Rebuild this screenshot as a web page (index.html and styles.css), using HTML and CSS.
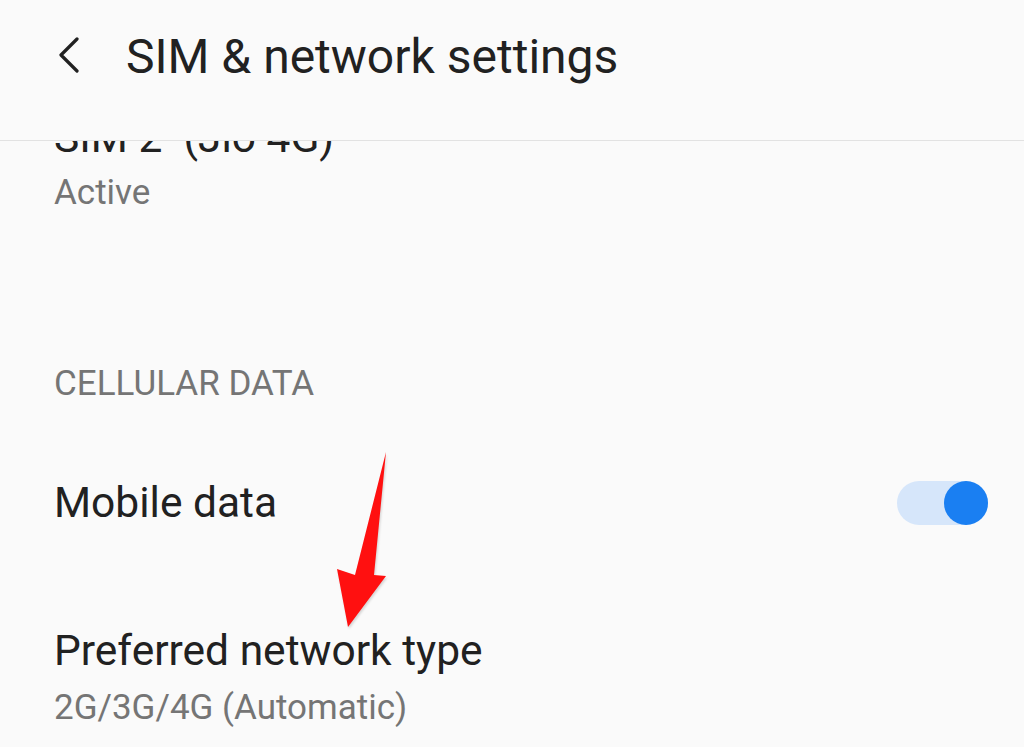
FILE: index.html
```html
<!DOCTYPE html>
<html lang="en">
<head>
    <meta charset="UTF-8">
    <meta name="viewport" content="width=device-width, initial-scale=1.0">
    <title>SIM &amp; network settings</title>
    <link rel="stylesheet" href="styles.css">
</head>
<body>
    <header class="toolbar">
        <svg class="back" width="24" height="36" viewBox="0 0 24 36">
            <path d="M20 2 L4 18 L20 34" fill="none" stroke="#212121" stroke-width="3.2" stroke-linecap="round" stroke-linejoin="round"/>
        </svg>
        <h1 class="title">SIM &amp; network settings</h1>
    </header>

    <main class="content">
        <div class="pref pref-sim">
            <div class="pref-title">SIM 2  (Jio 4G)</div>
            <div class="pref-summary">Active</div>
        </div>

        <div class="category">CELLULAR DATA</div>

        <div class="pref pref-switch">
            <div class="pref-title">Mobile data</div>
            <div class="switch on"><span class="thumb"></span></div>
        </div>

        <div class="pref pref-network">
            <div class="pref-title">Preferred network type</div>
            <div class="pref-summary">2G/3G/4G (Automatic)</div>
        </div>
    </main>

    <svg class="arrow" width="70" height="190" viewBox="0 0 70 190">
        <polygon points="57,2 45,125 57,126 19,177 8,119 26,125" fill="#ff1010"/>
    </svg>
</body>
</html>
```

FILE: styles.css
```css
html, body {
    margin: 0;
    height: 100%;
}
body {
    background-color: #fafafa;
    font-family: Roboto, "Noto Sans", sans-serif;
    color: #212121;
    overflow: hidden;
    position: relative;
}
.toolbar {
    display: flex;
    align-items: flex-start;
    height: 140px;
    border-bottom: 1px solid #e2e2e2;
    padding-left: 57px;
}
.back {
    margin-top: 37px;
    flex-shrink: 0;
}
.title {
    margin: 29px 0 0 45px;
    font-size: 48px;
    line-height: 56px;
    font-weight: 400;
}
.content {
    overflow: hidden;
    height: 606px;
    padding: 0 36px 0 54px;
}
.pref-title {
    font-size: 42.5px;
    line-height: 50px;
    white-space: pre;
}
.pref-summary {
    font-size: 35px;
    line-height: 42px;
    color: #757575;
}
.pref-sim {
    margin-top: -28px;
}
.pref-sim .pref-summary {
    margin-top: 9px;
}
.category {
    margin-top: 149px;
    font-size: 35px;
    line-height: 42px;
    color: #757575;
}
.pref-switch {
    margin-top: 73px;
    display: flex;
    align-items: center;
    justify-content: space-between;
}
.switch {
    width: 91px;
    height: 44px;
    border-radius: 22px;
    background-color: #d6e6fa;
    position: relative;
}
.switch .thumb {
    position: absolute;
    right: 0;
    top: 0;
    width: 44px;
    height: 44px;
    border-radius: 50%;
    background-color: #1a7ff2;
}
.pref-network {
    margin-top: 98px;
}
.pref-network .pref-summary {
    margin-top: 11px;
}
.arrow {
    position: absolute;
    left: 329px;
    top: 450px;
    filter: drop-shadow(1px 2px 1px rgba(0, 0, 0, 0.15));
}
```
